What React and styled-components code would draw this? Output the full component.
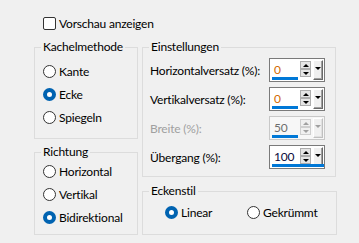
import React from 'react'
import styled, { createGlobalStyle } from 'styled-components'

const GlobalStyle = createGlobalStyle`
  html, body {
    margin: 0;
    padding: 0;
    background: #f0f0f0;
  }
  body {
    font-family: Lato, 'Liberation Sans', sans-serif;
    font-size: 12px;
    letter-spacing: -0.2px;
    color: #000;
  }
`

const Page = styled.div`
  width: 359px;
  height: 243px;
  box-sizing: border-box;
  padding: 17px 0 0 34px;
`

const CheckRow = styled.label`
  display: flex;
  align-items: center;
  gap: 3px;
  height: 13px;
  padding-left: 9px;
`

const CheckBox = styled.span`
  width: 13px;
  height: 13px;
  box-sizing: border-box;
  border: 1px solid #333;
  border-radius: 2px;
  background: #fff;
`

const Main = styled.div`
  display: flex;
  gap: 4px;
  margin-top: 17px;
`

const Column = styled.div`
  display: flex;
  flex-direction: column;
  gap: ${p => p.gap}px;
`

const Group = styled.div`
  position: relative;
  box-sizing: border-box;
  width: ${p => p.w}px;
  height: ${p => p.h}px;
  border: 1px solid #dcdcdc;
  padding: ${p => p.pad};
`

const Legend = styled.span`
  position: absolute;
  top: -8px;
  left: 6px;
  padding: 0 2px;
  line-height: 14px;
  background: #f0f0f0;
`

const RadioList = styled.div`
  display: flex;
  flex-direction: column;
`

const RadioRow = styled.label`
  display: flex;
  align-items: center;
  gap: 3px;
  height: 23px;
  width: ${p => (p.w ? `${p.w}px` : 'auto')};
`

const Circle = styled.span`
  width: 13px;
  height: 13px;
  box-sizing: border-box;
  border-radius: 50%;
  flex-shrink: 0;
  border: ${p => (p.on ? '4px solid #0063b1' : '1px solid #333')};
  background: #fff;
`

const Radio = ({ label, on, w }) => (
  <RadioRow w={w}>
    <Circle on={on} />
    <span>{label}</span>
  </RadioRow>
)

const Grid = styled.div`
  display: grid;
  grid-template-columns: 119px 56px;
  row-gap: 5px;
  align-items: center;
`

const Label = styled.span`
  color: ${p => (p.disabled ? '#a0a0a0' : '#000')};
`

const Spin = styled.div`
  position: relative;
  display: flex;
  align-items: flex-start;
  box-sizing: border-box;
  width: 56px;
  height: 24px;
  padding: 1px 1px 0 3px;
  border: 1px solid ${p => (p.disabled ? '#c8c8c8' : '#7a7a7a')};
  background: ${p => (p.disabled ? '#f7f7f7' : '#fff')};
`

const Value = styled.span`
  width: 27px;
  height: 20px;
  line-height: 20px;
  padding-left: 1px;
  color: ${p => p.color};
`

const Arrows = styled.div`
  display: flex;
  flex-direction: column;
  margin-top: 1px;
`

const ArrowBtn = styled.span`
  display: flex;
  align-items: center;
  justify-content: center;
  box-sizing: border-box;
  width: 11px;
  height: ${p => p.h}px;
  border: 1px solid ${p => (p.disabled ? '#cfcfcf' : '#adadad')};
  background: ${p => (p.disabled ? '#f0f0f0' : '#e5e5e5')};
  &::after {
    content: '';
    border-left: 3px solid transparent;
    border-right: 3px solid transparent;
    ${p => (p.up ? 'border-bottom' : 'border-top')}: 3px solid ${p => (p.disabled ? '#a0a0a0' : '#000')};
  }
`

const DropBtn = styled.span`
  display: flex;
  align-items: center;
  justify-content: center;
  box-sizing: border-box;
  width: 10px;
  height: 20px;
  margin-left: 2px;
  background: #f0f0f0;
  border-top: 1px solid #fff;
  border-left: 1px solid #fff;
  border-right: 1px solid ${p => (p.disabled ? '#c0c0c0' : '#696969')};
  border-bottom: 1px solid ${p => (p.disabled ? '#c0c0c0' : '#696969')};
  box-shadow: inset -1px -1px 0 ${p => (p.disabled ? '#e0e0e0' : '#a0a0a0')};
  &::after {
    content: '';
    margin-top: -4px;
    border-left: 3px solid transparent;
    border-right: 3px solid transparent;
    border-top: 3px solid ${p => (p.disabled ? '#a0a0a0' : '#000')};
  }
`

const Bar = styled.span`
  position: absolute;
  left: 2px;
  bottom: 1px;
  height: 3px;
  background: #0078d7;
`

const SpinBox = ({ value, color, bar, disabled }) => (
  <Spin disabled={disabled}>
    <Value color={color}>{value}</Value>
    <Arrows>
      <ArrowBtn up h={8} disabled={disabled} />
      <ArrowBtn h={8} disabled={disabled} />
    </Arrows>
    <DropBtn disabled={disabled} />
    <Bar style={{ width: bar }} />
  </Spin>
)

const CornerRow = styled.div`
  display: flex;
  align-items: center;
`

const App = () => (
  <>
    <GlobalStyle />
    <Page>
      <CheckRow>
        <CheckBox />
        <span>Vorschau anzeigen</span>
      </CheckRow>
      <Main>
        <Column gap={13}>
          <Group w={104} h={92} pad="12px 0 0 8px">
            <Legend>Kachelmethode</Legend>
            <RadioList>
              <Radio label="Kante" />
              <Radio label="Ecke" on />
              <Radio label="Spiegeln" />
            </RadioList>
          </Group>
          <Group w={104} h={83} pad="7px 0 0 8px">
            <Legend>Richtung</Legend>
            <RadioList>
              <Radio label="Horizontal" />
              <Radio label="Vertikal" />
              <Radio label="Bidirektional" on />
            </RadioList>
          </Group>
        </Column>
        <Column gap={14}>
          <Group w={194} h={130} pad="10px 0 0 7px">
            <Legend>Einstellungen</Legend>
            <Grid>
              <Label>Horizontalversatz (%):</Label>
              <SpinBox value="0" color="#d26a00" bar={26} />
              <Label>Vertikalversatz (%):</Label>
              <SpinBox value="0" color="#d26a00" bar={26} />
              <Label disabled>Breite (%):</Label>
              <SpinBox value="50" color="#6d6d6d" bar={26} disabled />
              <Label>Übergang (%):</Label>
              <SpinBox value="100" color="#0a0a3c" bar={52} />
            </Grid>
          </Group>
          <Group w={195} h={44} pad="9px 0 0 22px">
            <Legend>Eckenstil</Legend>
            <CornerRow>
              <Radio label="Linear" on w={82} />
              <Radio label="Gekrümmt" />
            </CornerRow>
          </Group>
        </Column>
      </Main>
    </Page>
  </>
)

export default App
